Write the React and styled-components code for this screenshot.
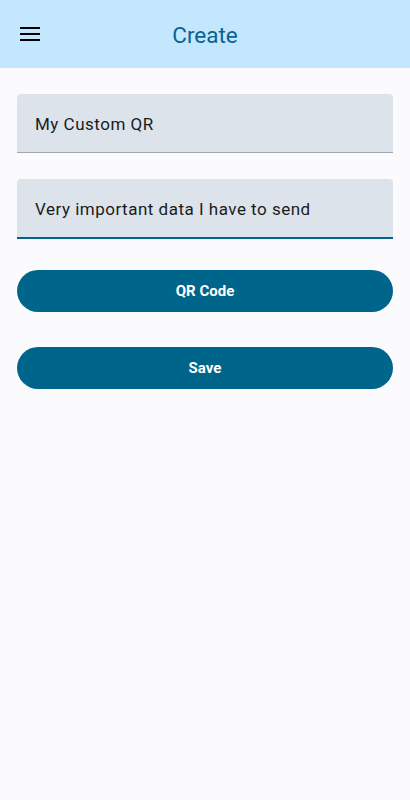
import React from "react";
import styled, { createGlobalStyle } from "styled-components";

const GlobalStyle = createGlobalStyle`
  html, body {
    margin: 0;
    padding: 0;
    background: #fbfbfe;
  }
  body {
    font-family: Roboto, "Liberation Sans", sans-serif;
  }
`;

const Screen = styled.div`
  min-height: 800px;
  background: #fbfbfe;
  display: flex;
  flex-direction: column;
`;

const TopBar = styled.header`
  height: 68px;
  background: #c2e7ff;
  display: flex;
  align-items: center;
  padding: 0 0 0 16px;
`;

const MenuButton = styled.button`
  width: 28px;
  height: 28px;
  border: none;
  background: none;
  padding: 0;
  display: flex;
  align-items: center;
  justify-content: center;
  cursor: pointer;
`;

const Title = styled.h1`
  flex: 1;
  margin: 2px 44px 0 0;
  text-align: center;
  font-family: Roboto, sans-serif;
  font-size: 22.5px;
  font-weight: 400;
  color: #0a6290;
`;

const Content = styled.main`
  display: flex;
  flex-direction: column;
  padding: 26px 17px 0;
  gap: 26px;
`;

const Field = styled.div`
  height: 56px;
  background: #dde3ea;
  border-radius: 4px 4px 0 0;
  border-bottom: ${(p) => (p.focused ? "2px solid #00628b" : "1px solid #a3a7ab")};
  display: flex;
  align-items: center;
  padding: 2px 18px 0;
  font-family: Roboto, sans-serif;
  font-size: 17px;
  letter-spacing: 0.5px;
  color: #191c1e;
`;

const Buttons = styled.div`
  display: flex;
  flex-direction: column;
  gap: 35px;
  margin-top: 5px;
`;

const PillButton = styled.button`
  height: 42px;
  border: none;
  border-radius: 21px;
  background: #00658b;
  color: #ffffff;
  font-family: Roboto, sans-serif;
  font-size: 15px;
  font-weight: 700;
  cursor: pointer;
`;

const MenuIcon = () => (
  <svg width="20" height="14" viewBox="0 0 20 14">
    <rect x="0" y="0" width="20" height="2" fill="#000" />
    <rect x="0" y="6" width="20" height="2" fill="#000" />
    <rect x="0" y="12" width="20" height="2" fill="#000" />
  </svg>
);

export default function App() {
  return (
    <>
      <GlobalStyle />
      <Screen>
        <TopBar>
          <MenuButton aria-label="menu">
            <MenuIcon />
          </MenuButton>
          <Title>Create</Title>
        </TopBar>
        <Content>
          <Field>My Custom QR</Field>
          <Field focused>Very important data I have to send</Field>
          <Buttons>
            <PillButton>QR Code</PillButton>
            <PillButton>Save</PillButton>
          </Buttons>
        </Content>
      </Screen>
    </>
  );
}
